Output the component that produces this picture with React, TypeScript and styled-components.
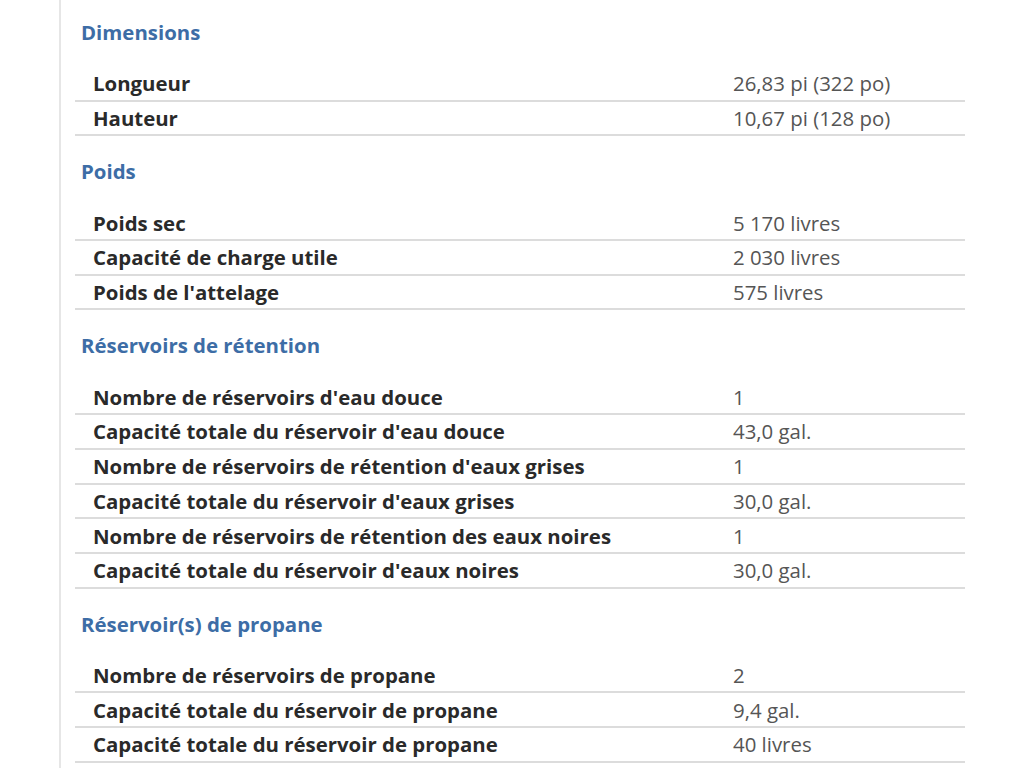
import styled, { createGlobalStyle } from 'styled-components'

const GlobalStyle = createGlobalStyle`
  html, body {
    margin: 0;
    padding: 0;
    background: #ffffff;
  }
  body {
    font-family: "Open Sans", "Noto Sans", "Liberation Sans", sans-serif;
  }
`

type Spec = { label: string; value: string }
type Section = { title: string; rows: Spec[] }

const sections: Section[] = [
  {
    title: 'Dimensions',
    rows: [
      { label: 'Longueur', value: '26,83 pi (322 po)' },
      { label: 'Hauteur', value: '10,67 pi (128 po)' },
    ],
  },
  {
    title: 'Poids',
    rows: [
      { label: 'Poids sec', value: '5 170 livres' },
      { label: 'Capacité de charge utile', value: '2 030 livres' },
      { label: "Poids de l'attelage", value: '575 livres' },
    ],
  },
  {
    title: 'Réservoirs de rétention',
    rows: [
      { label: "Nombre de réservoirs d'eau douce", value: '1' },
      { label: "Capacité totale du réservoir d'eau douce", value: '43,0 gal.' },
      { label: "Nombre de réservoirs de rétention d'eaux grises", value: '1' },
      { label: "Capacité totale du réservoir d'eaux grises", value: '30,0 gal.' },
      { label: 'Nombre de réservoirs de rétention des eaux noires', value: '1' },
      { label: "Capacité totale du réservoir d'eaux noires", value: '30,0 gal.' },
    ],
  },
  {
    title: 'Réservoir(s) de propane',
    rows: [
      { label: 'Nombre de réservoirs de propane', value: '2' },
      { label: 'Capacité totale du réservoir de propane', value: '9,4 gal.' },
      { label: 'Capacité totale du réservoir de propane', value: '40 livres' },
    ],
  },
]

const Page = styled.div`
  min-height: 768px;
  padding-left: 59px;
  box-sizing: border-box;
`

const Panel = styled.div`
  min-height: 768px;
  border-left: 2px solid #e6e6e6;
  padding-left: 14px;
  width: 905px;
`

const Block = styled.section`
  padding-top: 23px;
  &:first-child {
    padding-top: 20px;
  }
`

const Heading = styled.h3`
  margin: 0 0 23px 6px;
  font-size: 20.4px;
  line-height: 24px;
  font-weight: 700;
  color: #3d6da6;
`

const Table = styled.div`
  display: flex;
  flex-direction: column;
  width: 890px;
`

const Row = styled.div`
  display: grid;
  grid-template-columns: 658px 1fr;
  align-items: center;
  height: 34.7px;
  box-sizing: border-box;
  border-bottom: 2px solid #dcdcdc;
`

const Label = styled.span`
  padding-left: 18px;
  font-size: 20.4px;
  font-weight: 700;
  color: #2a2a2a;
  white-space: nowrap;
`

const Value = styled.span`
  font-size: 20.4px;
  color: #555555;
  white-space: nowrap;
`

export default function App() {
  return (
    <>
      <GlobalStyle />
      <Page>
        <Panel>
          {sections.map((s) => (
            <Block key={s.title}>
              <Heading>{s.title}</Heading>
              <Table>
                {s.rows.map((r, i) => (
                  <Row key={i}>
                    <Label>{r.label}</Label>
                    <Value>{r.value}</Value>
                  </Row>
                ))}
              </Table>
            </Block>
          ))}
        </Panel>
      </Page>
    </>
  )
}
